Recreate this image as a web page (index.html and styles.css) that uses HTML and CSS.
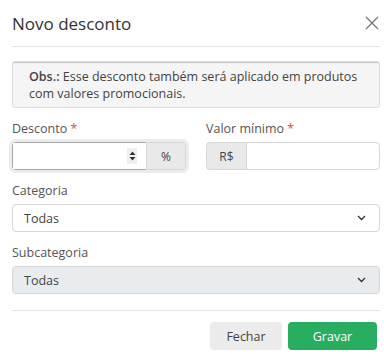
FILE: index.html
```html
<!DOCTYPE html>
<html lang="pt-BR">
<head>
    <meta charset="UTF-8">
    <meta name="viewport" content="width=device-width, initial-scale=1.0">
    <title>Novo desconto</title>
    <link rel="stylesheet" href="styles.css">
</head>
<body>
    <div class="modal">
        <header class="modal-header">
            <h1>Novo desconto</h1>
            <button class="close-button" aria-label="Fechar">
                <svg width="14" height="14" viewBox="0 0 14 14">
                    <path d="M1 1 L13 13 M13 1 L1 13" stroke="#777" stroke-width="1.3" fill="none"/>
                </svg>
            </button>
        </header>

        <div class="modal-body">
            <div class="notice">
                <strong>Obs.:</strong> Esse desconto também será aplicado em produtos com valores promocionais.
            </div>

            <div class="form-row">
                <div class="field">
                    <label>Desconto <span class="required">*</span></label>
                    <div class="input-group focused">
                        <div class="input-wrap">
                            <input type="text" class="form-input">
                            <span class="spinner">
                                <svg width="7" height="10" viewBox="0 0 7 10">
                                    <path d="M0.5 4 L3.5 0.5 L6.5 4 Z M0.5 6 L3.5 9.5 L6.5 6 Z" fill="#333"/>
                                </svg>
                            </span>
                        </div>
                        <span class="addon addon-right">%</span>
                    </div>
                </div>
                <div class="field">
                    <label>Valor mínimo <span class="required">*</span></label>
                    <div class="input-group">
                        <span class="addon addon-left">R$</span>
                        <input type="text" class="form-input">
                    </div>
                </div>
            </div>

            <div class="field">
                <label>Categoria</label>
                <div class="select">
                    <span>Todas</span>
                    <svg width="9" height="6" viewBox="0 0 9 6">
                        <path d="M1 1 L4.5 4.5 L8 1" stroke="#333" stroke-width="1.3" fill="none"/>
                    </svg>
                </div>
            </div>

            <div class="field">
                <label>Subcategoria</label>
                <div class="select disabled">
                    <span>Todas</span>
                    <svg width="9" height="6" viewBox="0 0 9 6">
                        <path d="M1 1 L4.5 4.5 L8 1" stroke="#333" stroke-width="1.3" fill="none"/>
                    </svg>
                </div>
            </div>
        </div>

        <footer class="modal-footer">
            <button class="btn btn-light">Fechar</button>
            <button class="btn btn-success">Gravar</button>
        </footer>
    </div>
</body>
</html>
```

FILE: styles.css
```css
:root {
    --text-color: #333333;
    --label-color: #555555;
    --border-color: #d6d6d6;
    --addon-bg: #e9e9e9;
    --divider: #e6e6e6;
    --success: #27ae60;
}

body {
    margin: 0;
    padding: 0;
    font-family: 'Open Sans', 'Noto Sans', sans-serif;
    color: var(--text-color);
    background: #ffffff;
}

.modal {
    width: 389px;
    padding: 0 9px 0 12px;
    box-sizing: border-box;
}

.modal-header {
    height: 46px;
    display: flex;
    align-items: center;
    justify-content: space-between;
    border-bottom: 1px solid var(--divider);
}

.modal-header h1 {
    margin: 0;
    font-size: 17px;
    font-weight: 400;
    color: #333;
    padding-top: 1px;
}

.close-button {
    background: none;
    border: 0;
    padding: 0;
    margin-right: 1px;
    display: flex;
    cursor: pointer;
}

.modal-body {
    padding: 14px 0 16px;
    border-bottom: 1px solid var(--divider);
}

.notice {
    background: #f5f5f5;
    border: 1px solid #dcdcdc;
    border-radius: 3px;
    box-shadow: inset 0 2px 1px -1px #c4c4c4;
    padding: 6px 16px 5px;
    font-size: 12.5px;
    line-height: 17px;
    color: #444;
}

.notice strong {
    font-weight: 600;
}

.form-row {
    display: grid;
    grid-template-columns: 174px 174px;
    gap: 20px;
}

.field label {
    display: block;
    font-size: 12.5px;
    line-height: 18px;
    color: var(--label-color);
    margin: 12px 0 4px;
}

.required {
    color: #e74c3c;
}

.input-group {
    display: flex;
    height: 28px;
    border-radius: 4px;
}

.input-group.focused {
    box-shadow: 0 0 0 3px #ececec;
}

.input-wrap {
    flex: 1;
    min-width: 0;
    display: flex;
    align-items: center;
    border: 1px solid #a9a9a9;
    border-right: 0;
    border-radius: 4px 0 0 4px;
    background: #fff;
}

.input-wrap .form-input {
    border: 0;
    border-radius: 0;
    align-self: stretch;
}

.form-input {
    flex: 1;
    width: 0;
    min-width: 0;
    border: 1px solid var(--border-color);
    border-radius: 0 4px 4px 0;
    outline: none;
    font-family: inherit;
    font-size: 13px;
    padding: 0 8px;
    background: #fff;
}

.spinner {
    display: flex;
    align-items: center;
    justify-content: center;
    width: 10px;
    height: 16px;
    background: #efefef;
    margin-right: 9px;
}

.addon {
    flex: none;
    display: flex;
    align-items: center;
    justify-content: center;
    background: var(--addon-bg);
    border: 1px solid var(--border-color);
    font-size: 12px;
    color: #444;
}

.addon-right {
    width: 38px;
    border-radius: 0 4px 4px 0;
}

.addon-left {
    width: 39px;
    border-right: 0;
    border-radius: 4px 0 0 4px;
}

.select {
    height: 28px;
    box-sizing: border-box;
    border: 1px solid var(--border-color);
    border-radius: 4px;
    display: flex;
    align-items: center;
    justify-content: space-between;
    padding: 0 13px 0 11px;
    font-size: 12.5px;
    color: #444;
    background: #fff;
}

.select.disabled {
    background: #e9ecef;
}

.modal-footer {
    display: flex;
    justify-content: flex-end;
    gap: 6px;
    padding: 11px 3px 0 0;
}

.btn {
    height: 28px;
    border: 0;
    border-radius: 4px;
    font-family: inherit;
    font-size: 12.5px;
    cursor: pointer;
}

.btn-light {
    width: 72px;
    background: #ececec;
    color: #444;
}

.btn-success {
    width: 89px;
    background: var(--success);
    color: #fff;
}
```
